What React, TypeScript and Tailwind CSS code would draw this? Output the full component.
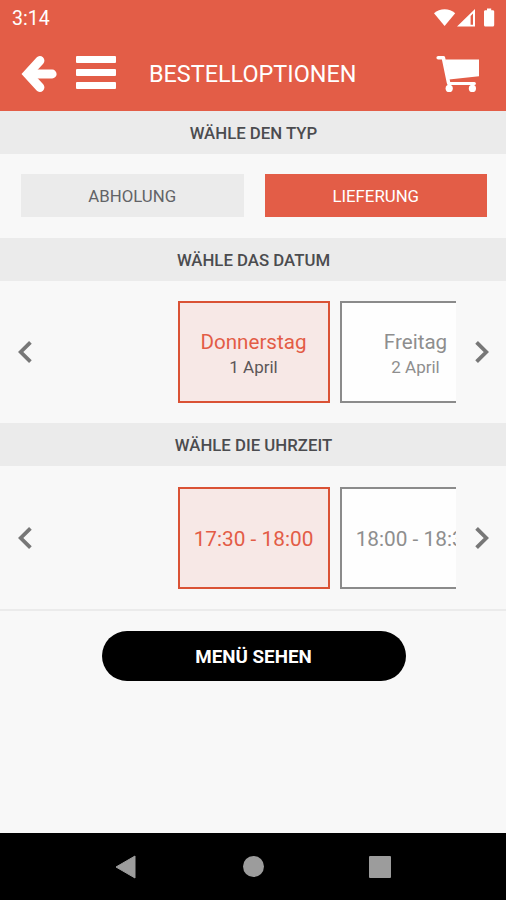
import { useState } from 'react';

interface SlotOption {
    title: string;
    subtitle?: string;
}

interface SlotPickerProps {
    options: SlotOption[];
    className: string;
}

const DATES: SlotOption[] = [
    { title: 'Donnerstag', subtitle: '1 April' },
    { title: 'Freitag', subtitle: '2 April' },
];

const TIMES: SlotOption[] = [{ title: '17:30 - 18:00' }, { title: '18:00 - 18:30' }];

function StatusBar() {
    return (
        <div className="flex h-9 items-center justify-between pl-3 pr-2 text-white">
            <span className="pt-0.5 text-[19.5px] leading-none">3:14</span>
            <svg width="64" height="22" viewBox="0 0 64 22" fill="currentColor" className="-mt-px">
                {/* Wifi */}
                <path d="M0 6.2C5.8 1 15.4 1 21.2 6.2L10.6 19Z" />
                {/* Signal */}
                <path fillRule="evenodd" d="M23 19.6 41 2V19.6ZM36.6 9V17.8H39V6.6Z" />
                {/* Battery */}
                <path d="M53 1.5h4.2v1.7h1.6c.8 0 1.4.6 1.4 1.4V18c0 .9-.6 1.5-1.4 1.5h-7.4c-.8 0-1.4-.6-1.4-1.5V4.6c0-.8.6-1.4 1.4-1.4H53Z" />
            </svg>
        </div>
    );
}

function AppBar() {
    return (
        <div className="flex h-[75px] items-center pl-[21px] pr-[26px] text-white">
            <button aria-label="Zurück">
                <svg width="36" height="38" viewBox="0 0 36 38" fill="none" stroke="currentColor" className="mt-px">
                    <path d="M18.9 5.6 6.6 19 18.9 32.4" strokeWidth="9" strokeLinecap="round" />
                    <path d="M8 19H31.2" strokeWidth="8.8" strokeLinecap="round" />
                </svg>
            </button>
            <button aria-label="Menü" className="-mt-0.5 ml-[19px] flex w-10 flex-col gap-1.5">
                <span className="h-[7px] rounded-[1px] bg-white" />
                <span className="h-[7px] rounded-[1px] bg-white" />
                <span className="h-[7px] rounded-[1px] bg-white" />
            </button>
            <h1 className="ml-[33px] flex-1 whitespace-nowrap pt-[3px] text-[23.4px] leading-none">BESTELLOPTIONEN</h1>
            <button aria-label="Warenkorb">
                <svg width="44" height="38" viewBox="0 0 44 38" fill="none" stroke="currentColor">
                    <path d="M2.2 2.8H7.4L12.6 28" strokeWidth="3.6" strokeLinecap="round" strokeLinejoin="round" />
                    <path d="M12.6 28.4H38.4" strokeWidth="3" strokeLinecap="round" />
                    <path d="M9 4.6H43V21.3L13 24.6Z" fill="currentColor" stroke="none" />
                    <circle cx="13.2" cy="33.4" r="3.6" fill="currentColor" stroke="none" />
                    <circle cx="36.4" cy="33.4" r="3.6" fill="currentColor" stroke="none" />
                </svg>
            </button>
        </div>
    );
}

function SectionTitle({ children }: { children: string }) {
    return (
        <h2 className="flex h-[43px] items-center justify-center bg-[#ebebeb] pl-px pt-[2px] text-[16.8px] font-medium leading-none text-[#4b4c4f]">
            {children}
        </h2>
    );
}

function Chevron({ flip = false }: { flip?: boolean }) {
    return (
        <svg
            width="14"
            height="24"
            viewBox="0 0 14 24"
            fill="none"
            stroke="#777"
            strokeWidth="3.8"
            className={flip ? 'ml-0.5 rotate-180' : ''}
        >
            <path d="M12.4 2.3 2.7 12 12.4 21.7" />
        </svg>
    );
}

function SlotPicker({ options, className }: SlotPickerProps) {
    const [selected, setSelected] = useState(0);

    return (
        <div className={`flex items-center justify-between ${className}`}>
            <button
                aria-label="Vorherige"
                onClick={() => setSelected(Math.max(0, selected - 1))}
                className="flex w-[50px] justify-center"
            >
                <Chevron />
            </button>
            <div className="flex w-[406px] gap-2.5 overflow-hidden pl-32">
                {options.map((option, i) => (
                    <button
                        key={option.title}
                        onClick={() => setSelected(i)}
                        className={`flex h-[102px] w-[152px] shrink-0 flex-col items-center justify-center whitespace-nowrap border-2 pr-px pt-0.5 ${
                            i === selected
                                ? 'border-[#da5235] bg-[#f7e8e6] text-[#e35c46]'
                                : 'border-[#8b8b8b] bg-[#fefefe] text-[#8e8e8e]'
                        }`}
                    >
                        <span className={`leading-[26px] ${option.subtitle ? 'pt-0.5 text-[20.6px]' : 'text-[20.8px]'}`}>
                            {option.title}
                        </span>
                        {option.subtitle && (
                            <span className={`text-[17px] leading-6 ${i === selected ? 'text-[#5c5658]' : ''}`}>
                                {option.subtitle}
                            </span>
                        )}
                    </button>
                ))}
            </div>
            <button
                aria-label="Nächste"
                onClick={() => setSelected(Math.min(options.length - 1, selected + 1))}
                className="flex w-[50px] justify-center"
            >
                <Chevron flip />
            </button>
        </div>
    );
}

function NavigationBar() {
    return (
        <nav className="flex h-[67px] items-center justify-between bg-black pl-[115px] pr-[115px] text-[#9c9c9c]">
            <svg width="22" height="24" viewBox="0 0 22 24" fill="currentColor">
                <path d="M1 12 20 1V23Z" stroke="currentColor" strokeLinejoin="round" />
            </svg>
            <span className="size-[21px] rounded-full bg-current" />
            <span className="size-[22px] rounded-[1px] bg-current" />
        </nav>
    );
}

export default function App() {
    const [type, setType] = useState('LIEFERUNG');

    return (
        <div className="flex h-[900px] w-[506px] flex-col overflow-hidden bg-[#f8f8f8] font-['Roboto',sans-serif]">
            <header className="h-[111px] bg-[#e35d47]">
                <StatusBar />
                <AppBar />
            </header>

            <main className="flex-1">
                <SectionTitle>WÄHLE DEN TYP</SectionTitle>
                <div className="flex h-[84px] items-center gap-[21px] pb-px pl-[21px] pr-[19px]">
                    {['ABHOLUNG', 'LIEFERUNG'].map((name) => (
                        <button
                            key={name}
                            onClick={() => setType(name)}
                            className={`h-[43px] flex-1 pt-[3px] text-[16.8px] ${
                                type === name ? 'bg-[#e35d47] text-white' : 'bg-[#ebebeb] text-[#626367]'
                            }`}
                        >
                            {name}
                        </button>
                    ))}
                </div>

                <SectionTitle>WÄHLE DAS DATUM</SectionTitle>
                <SlotPicker options={DATES} className="h-[142px]" />

                <SectionTitle>WÄHLE DIE UHRZEIT</SectionTitle>
                <SlotPicker options={TIMES} className="h-[143px]" />

                <div className="flex justify-center border-t-2 border-[#ebebeb] pl-px pt-5">
                    <button className="h-[50px] w-[304px] rounded-full bg-black pt-[3px] text-[18.8px] font-bold text-white">
                        MENÜ SEHEN
                    </button>
                </div>
            </main>

            <NavigationBar />
        </div>
    );
}
